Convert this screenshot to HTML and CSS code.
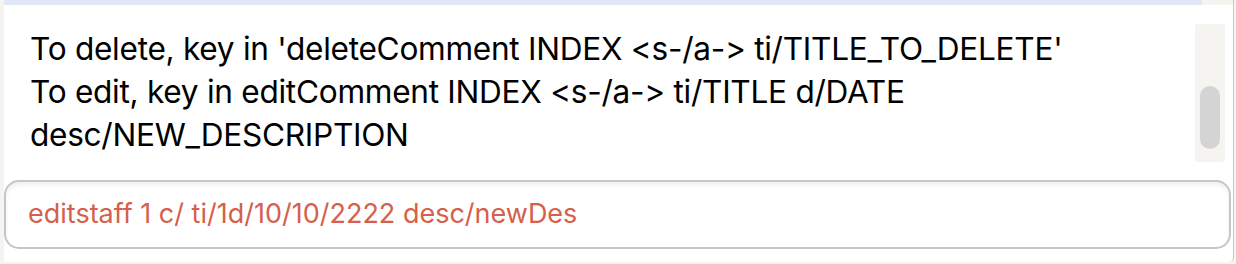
FILE: index.html
```html
<!DOCTYPE html>
<html>
<head>
<meta charset="utf-8">
<link rel="stylesheet" href="styles.css">
</head>
<body>
<div class="panel">
  <div class="band"><div class="band-fill"></div><div class="band-rest"></div></div>
  <div class="result">
    <div class="result-text">To delete, key in 'deleteComment INDEX &lt;s-/a-&gt; ti/TITLE_TO_DELETE'<br>To edit, key in editComment INDEX &lt;s-/a-&gt; ti/TITLE d/DATE desc/NEW_DESCRIPTION</div>
    <div class="scroll-track"><div class="scroll-thumb"></div></div>
  </div>
  <div class="command">
    <div class="command-box">editstaff 1 c/ ti/1d/10/10/2222 desc/newDes</div>
  </div>
</div>
</body>
</html>
```

FILE: styles.css
```css
html, body {
  margin: 0;
  padding: 0;
  background: #f5f4f0;
  width: 1236px;
  height: 264px;
  overflow: hidden;
}

.panel {
  margin-left: 4px;
  width: 1229px;
  height: 262px;
  background: #ffffff;
  border-right: 1px solid #c9c9c6;
  border-bottom-right-radius: 5px;
  display: flex;
  flex-direction: column;
  font-family: Inter, "Noto Sans", sans-serif;
}

.band {
  display: flex;
  height: 5px;
}

.band-fill {
  width: 1198px;
  background: #e1e7f7;
}

.band-rest {
  flex: 1;
  background: #f5f4f0;
}

.result {
  display: flex;
  height: 170px;
  padding-top: 19px;
  box-sizing: border-box;
}

.result-text {
  flex: 1;
  padding-left: 26px;
  padding-top: 3px;
  font-size: 31.6px;
  line-height: 43px;
  color: #000;
  letter-spacing: -0.28px;
}

.scroll-track {
  width: 30px;
  height: 138px;
  margin-right: 8px;
  background: #f5f4f0;
  border-radius: 3px;
  display: flex;
  justify-content: center;
  padding-top: 62px;
  box-sizing: border-box;
}

.scroll-thumb {
  width: 20px;
  height: 63px;
  background: #d4d4d4;
  border-radius: 10px;
}

.command {
  padding-top: 5px;
  padding-right: 2px;
}

.command-box {
  height: 69px;
  box-sizing: border-box;
  border: 2px solid #c6c6c6;
  border-radius: 15px;
  box-shadow: inset 0 3px 4px rgba(0,0,0,0.06);
  padding-left: 22px;
  padding-bottom: 2px;
  display: flex;
  align-items: center;
  font-size: 27px;
  color: #d5604b;
  letter-spacing: 0;
}
```
